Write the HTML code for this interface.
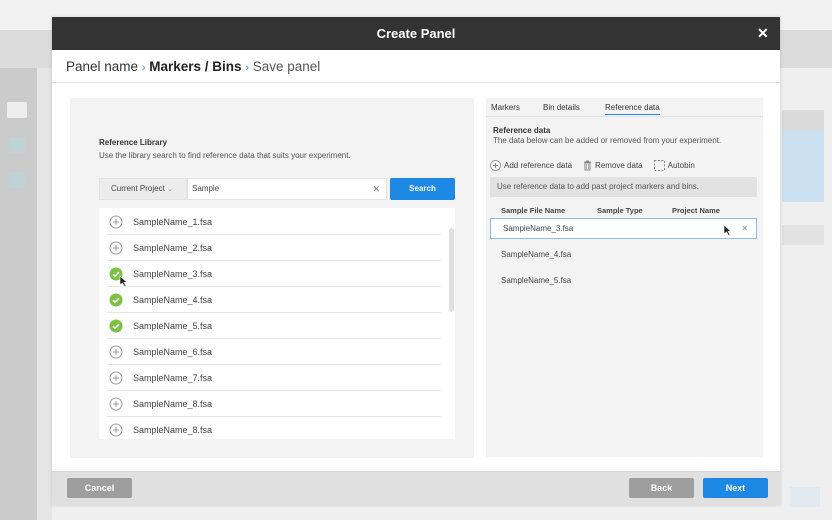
<!DOCTYPE html>
<html><head><style>
*{box-sizing:border-box;margin:0;padding:0}
body{width:832px;height:520px;overflow:hidden;background:#efefef;font-family:"Liberation Sans",sans-serif;position:relative;color:#333}
.abs{position:absolute}
.row{position:absolute;left:8px;right:14px;height:26px;border-bottom:1px solid #e6e6e6;font-size:9px;color:#444;line-height:26px;padding-left:26px}
.row svg{position:absolute;left:2px;top:6px}
.btn{position:absolute;height:20px;color:#fff;font-size:9px;font-weight:bold;text-align:center;line-height:20px;border-radius:2px}
</style></head><body>
<div class="abs" style="left:0;top:0;width:832px;height:30px;background:#f2f2f2"></div>
<div class="abs" style="left:0;top:30px;width:832px;height:38px;background:#dcdcdc"></div>
<div class="abs" style="left:0;top:68px;width:37px;height:452px;background:#cbcbcb"></div>
<div class="abs" style="left:37px;top:68px;width:15px;height:452px;background:#e6e6e6"></div>
<div class="abs" style="left:7px;top:102px;width:20px;height:16px;background:#eeeeee;border-radius:2px"></div>
<div class="abs" style="left:9px;top:137px;width:16px;height:16px;background:#bfd2d4"></div>
<div class="abs" style="left:9px;top:172px;width:16px;height:16px;background:#bfd2d4"></div>
<div class="abs" style="left:782px;top:110px;width:42px;height:20px;background:#dadada"></div>
<div class="abs" style="left:782px;top:130px;width:42px;height:72px;background:#cadff0"></div>
<div class="abs" style="left:782px;top:225px;width:42px;height:20px;background:#e2e2e2"></div>
<div class="abs" style="left:790px;top:487px;width:30px;height:20px;background:#e3e9f0"></div>

<div class="abs" style="left:52px;top:17px;width:728px;height:488px;background:#fff;box-shadow:0 0 4px rgba(0,0,0,.15)">
 <div class="abs" style="left:0;top:0;width:728px;height:33px;background:#333;color:#fff;font-size:13px;font-weight:bold;text-align:center;line-height:33px">Create Panel</div>
 <div class="abs" style="left:705px;top:8px;color:#fff;font-size:14px;font-weight:bold">✕</div>
 <div class="abs" style="left:0;top:33px;width:728px;height:33px;border-bottom:1px solid #e4e4e4;font-size:13.5px;line-height:33px;padding-left:14px;color:#333">Panel name <span style="color:#2a8ae6;font-size:11px">›</span> <span style="color:#222;font-weight:bold">Markers / Bins</span> <span style="color:#2a8ae6;font-size:11px">›</span> <span style="color:#555">Save panel</span></div>

 <div class="abs" style="left:18px;top:81px;width:404px;height:360px;background:#f3f3f3">
  <div class="abs" style="left:29px;top:40px;font-size:8px;font-weight:bold;color:#333">Reference Library</div>
  <div class="abs" style="left:29px;top:53px;font-size:8px;color:#555">Use the library search to find reference data that suits your experiment.</div>
  <div class="abs" style="left:29px;top:80px;width:88px;height:22px;background:#ececec;border:1px solid #e2e2e2;font-size:8px;color:#444;line-height:20px;padding-left:11px">Current Project <span style="color:#999;font-size:7px">⌄</span></div>
  <div class="abs" style="left:117px;top:80px;width:200px;height:22px;background:#fff;border:1px solid #e2e2e2;font-size:8px;color:#444;line-height:20px;padding-left:4px">Sample<span style="position:absolute;right:6px;color:#777;font-size:9px">✕</span></div>
  <div class="abs" style="left:320px;top:80px;width:65px;height:22px;background:#1e88e5;color:#fff;font-size:8px;font-weight:bold;text-align:center;line-height:22px;border-radius:2px">Search</div>
  <div class="abs" style="left:29px;top:110px;width:356px;height:231px;background:#fff;overflow:hidden">
   <div class="abs" style="left:350px;top:20px;width:5px;height:84px;background:#e0e0e0;border-radius:3px"></div>
   <div class="row" style="top:1px"><svg width="14" height="14"><circle cx="7" cy="7" r="6" fill="none" stroke="#999"/><path d="M7 4v6M4 7h6" stroke="#999"/></svg>SampleName_1.fsa</div>
   <div class="row" style="top:27px"><svg width="14" height="14"><circle cx="7" cy="7" r="6" fill="none" stroke="#999"/><path d="M7 4v6M4 7h6" stroke="#999"/></svg>SampleName_2.fsa</div>
   <div class="row" style="top:53px"><svg width="14" height="14"><circle cx="7" cy="7" r="6.5" fill="#7cc242"/><path d="M4 7.2l2 2 4-4" fill="none" stroke="#fff" stroke-width="1.6"/></svg>SampleName_3.fsa</div>
   <div class="row" style="top:79px"><svg width="14" height="14"><circle cx="7" cy="7" r="6.5" fill="#7cc242"/><path d="M4 7.2l2 2 4-4" fill="none" stroke="#fff" stroke-width="1.6"/></svg>SampleName_4.fsa</div>
   <div class="row" style="top:105px"><svg width="14" height="14"><circle cx="7" cy="7" r="6.5" fill="#7cc242"/><path d="M4 7.2l2 2 4-4" fill="none" stroke="#fff" stroke-width="1.6"/></svg>SampleName_5.fsa</div>
   <div class="row" style="top:131px"><svg width="14" height="14"><circle cx="7" cy="7" r="6" fill="none" stroke="#999"/><path d="M7 4v6M4 7h6" stroke="#999"/></svg>SampleName_6.fsa</div>
   <div class="row" style="top:157px"><svg width="14" height="14"><circle cx="7" cy="7" r="6" fill="none" stroke="#999"/><path d="M7 4v6M4 7h6" stroke="#999"/></svg>SampleName_7.fsa</div>
   <div class="row" style="top:183px"><svg width="14" height="14"><circle cx="7" cy="7" r="6" fill="none" stroke="#999"/><path d="M7 4v6M4 7h6" stroke="#999"/></svg>SampleName_8.fsa</div>
   <div class="row" style="top:209px;border:none"><svg width="14" height="14"><circle cx="7" cy="7" r="6" fill="none" stroke="#999"/><path d="M7 4v6M4 7h6" stroke="#999"/></svg>SampleName_8.fsa</div>
   <svg class="abs" style="left:20px;top:67px" width="9" height="12"><path d="M1 1v9l2.5-2 2 3.5 1.5-.8-2-3.3H8z" fill="#222" stroke="#fff" stroke-width=".6"/></svg>
  </div>
 </div>

 <div class="abs" style="left:434px;top:81px;width:277px;height:359px;background:#f3f3f3">
  <div class="abs" style="left:0;top:0;width:277px;height:19px;border-bottom:1px solid #e2e2e2;font-size:8px;color:#333">
   <span class="abs" style="left:5px;top:5px">Markers</span>
   <span class="abs" style="left:57px;top:5px">Bin details</span>
   <span class="abs" style="left:119px;top:5px;padding-bottom:2px;border-bottom:1.5px solid #1e88e5">Reference data</span>
  </div>
  <div class="abs" style="left:7px;top:28px;font-size:8px;font-weight:bold">Reference data</div>
  <div class="abs" style="left:7px;top:38px;font-size:8px;color:#555">The data below can be added or removed from your experiment.</div>
  <div class="abs" style="left:4px;top:62px;font-size:8px;color:#444;display:flex;align-items:center;gap:3px"><svg width="11" height="11"><circle cx="5.5" cy="5.5" r="5" fill="#fff" stroke="#999"/><path d="M5.5 3v5M3 5.5h5" stroke="#888"/></svg>Add reference data
   <svg width="9" height="11" style="margin-left:8px"><path d="M1 2h7M3 1h3M2 3h5v7H2z" fill="none" stroke="#888"/><path d="M3.5 4v5M5.5 4v5" stroke="#888" stroke-width=".6"/></svg>Remove data
   <svg width="11" height="11" style="margin-left:8px"><rect x=".5" y=".5" width="10" height="10" fill="none" stroke="#888" stroke-dasharray="2 1.5"/></svg>Autobin</div>
  <div class="abs" style="left:4px;top:79px;width:267px;height:20px;background:#e2e2e2;font-size:8px;color:#555;line-height:20px;padding-left:7px">Use reference data to add past project markers and bins.</div>
  <div class="abs" style="left:15px;top:108px;font-size:7.5px;font-weight:bold;color:#444">Sample File Name</div>
  <div class="abs" style="left:111px;top:108px;font-size:7.5px;font-weight:bold;color:#444">Sample Type</div>
  <div class="abs" style="left:186px;top:108px;font-size:7.5px;font-weight:bold;color:#444">Project Name</div>
  <div class="abs" style="left:4px;top:120px;width:267px;height:21px;background:#fff;border:1px solid #8dbbe6;font-size:8px;line-height:19px;padding-left:12px;color:#444">SampleName_3.fsa<span style="position:absolute;right:8px;color:#888">✕</span>
   <svg class="abs" style="left:232px;top:5px" width="9" height="12"><path d="M1 1v9l2.5-2 2 3.5 1.5-.8-2-3.3H8z" fill="#222" stroke="#fff" stroke-width=".6"/></svg></div>
  <div class="abs" style="left:15px;top:152px;font-size:8px;color:#444">SampleName_4.fsa</div>
  <div class="abs" style="left:15px;top:178px;font-size:8px;color:#444">SampleName_5.fsa</div>
 </div>

 <div class="abs" style="left:0;top:454px;width:728px;height:34px;background:#e0e0e0;border-top:1px solid #d6d6d6"></div>
 <div class="btn" style="left:15px;top:461px;width:65px;background:#9e9e9e">Cancel</div>
 <div class="btn" style="left:577px;top:461px;width:65px;background:#9e9e9e">Back</div>
 <div class="btn" style="left:651px;top:461px;width:65px;background:#1e88e5">Next</div>
</div>
</body></html>
